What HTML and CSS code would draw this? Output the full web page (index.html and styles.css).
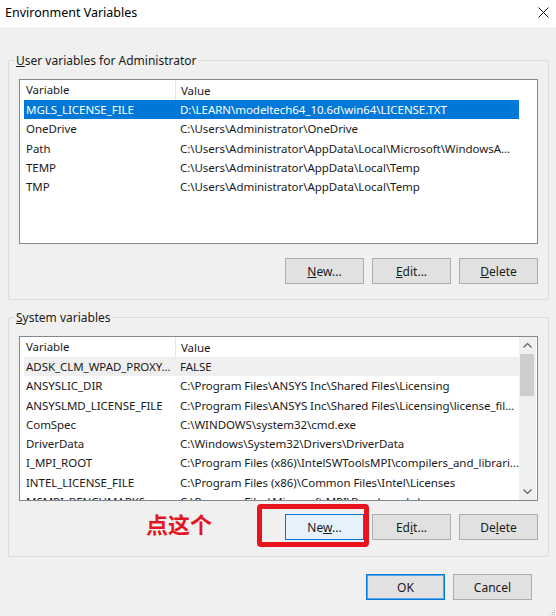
FILE: index.html
```html
<!DOCTYPE html>
<html lang="en">
<head>
    <meta charset="UTF-8">
    <meta name="viewport" content="width=device-width, initial-scale=1.0">
    <title>Environment Variables</title>
    <link rel="stylesheet" href="styles.css">
</head>
<body>
    <div class="titlebar">
        <span class="title">Environment Variables</span>
        <svg class="close" width="11" height="11" viewBox="0 0 11 11">
            <path d="M0.5 0.5 L10.5 10.5 M10.5 0.5 L0.5 10.5" stroke="#111" stroke-width="1" fill="none"/>
        </svg>
    </div>

    <div class="dialog">
        <fieldset class="group">
            <legend><u>U</u>ser variables for Administrator</legend>
            <div class="listbox">
                <div class="list-area">
                    <div class="row header">
                        <div class="col-name">Variable</div>
                        <div class="col-value">Value</div>
                    </div>
                    <div class="row selected">
                        <div class="col-name">MGLS_LICENSE_FILE</div>
                        <div class="col-value">D:\LEARN\modeltech64_10.6d\win64\LICENSE.TXT</div>
                    </div>
                    <div class="row">
                        <div class="col-name">OneDrive</div>
                        <div class="col-value">C:\Users\Administrator\OneDrive</div>
                    </div>
                    <div class="row">
                        <div class="col-name">Path</div>
                        <div class="col-value">C:\Users\Administrator\AppData\Local\Microsoft\WindowsA...</div>
                    </div>
                    <div class="row">
                        <div class="col-name">TEMP</div>
                        <div class="col-value">C:\Users\Administrator\AppData\Local\Temp</div>
                    </div>
                    <div class="row">
                        <div class="col-name">TMP</div>
                        <div class="col-value">C:\Users\Administrator\AppData\Local\Temp</div>
                    </div>
                </div>
            </div>
            <div class="button-row">
                <button class="btn"><u>N</u>ew...</button>
                <button class="btn"><u>E</u>dit...</button>
                <button class="btn"><u>D</u>elete</button>
            </div>
        </fieldset>

        <fieldset class="group second">
            <legend><u>S</u>ystem variables</legend>
            <div class="listbox">
                <div class="list-area">
                    <div class="row header">
                        <div class="col-name">Variable</div>
                        <div class="col-value">Value</div>
                    </div>
                    <div class="row hover">
                        <div class="col-name">ADSK_CLM_WPAD_PROXY...</div>
                        <div class="col-value">FALSE</div>
                    </div>
                    <div class="row">
                        <div class="col-name">ANSYSLIC_DIR</div>
                        <div class="col-value">C:\Program Files\ANSYS Inc\Shared Files\Licensing</div>
                    </div>
                    <div class="row">
                        <div class="col-name">ANSYSLMD_LICENSE_FILE</div>
                        <div class="col-value">C:\Program Files\ANSYS Inc\Shared Files\Licensing\license_fil...</div>
                    </div>
                    <div class="row">
                        <div class="col-name">ComSpec</div>
                        <div class="col-value">C:\WINDOWS\system32\cmd.exe</div>
                    </div>
                    <div class="row">
                        <div class="col-name">DriverData</div>
                        <div class="col-value">C:\Windows\System32\Drivers\DriverData</div>
                    </div>
                    <div class="row">
                        <div class="col-name">I_MPI_ROOT</div>
                        <div class="col-value">C:\Program Files (x86)\IntelSWToolsMPI\compilers_and_librari...</div>
                    </div>
                    <div class="row">
                        <div class="col-name">INTEL_LICENSE_FILE</div>
                        <div class="col-value">C:\Program Files (x86)\Common Files\Intel\Licenses</div>
                    </div>
                    <div class="row">
                        <div class="col-name">MSMPI_BENCHMARKS</div>
                        <div class="col-value">C:\Program Files\Microsoft MPI\Benchmarks\</div>
                    </div>
                </div>
                <div class="scrollbar">
                    <svg class="arrow" width="17" height="17" viewBox="0 0 17 17">
                        <path d="M4.5 10.5 L8.5 6.5 L12.5 10.5" stroke="#606060" stroke-width="1.2" fill="none"/>
                    </svg>
                    <div class="track">
                        <div class="thumb"></div>
                    </div>
                    <svg class="arrow" width="17" height="17" viewBox="0 0 17 17">
                        <path d="M4.5 6.5 L8.5 10.5 L12.5 6.5" stroke="#606060" stroke-width="1.2" fill="none"/>
                    </svg>
                </div>
            </div>
            <div class="button-row">
                <span class="hint">点这个</span>
                <span class="marked">
                    <button class="btn focused">Ne<u>w</u>...</button>
                </span>
                <button class="btn">Ed<u>i</u>t...</button>
                <button class="btn">De<u>l</u>ete</button>
            </div>
        </fieldset>

        <div class="footer">
            <button class="btn default">OK</button>
            <button class="btn">Cancel</button>
        </div>
    </div>

    <svg class="grip" width="8" height="8" viewBox="0 0 8 8">
        <rect x="6" y="2" width="1" height="1" fill="#b0b0b0"/>
        <rect x="4" y="4" width="1" height="1" fill="#b0b0b0"/>
        <rect x="6" y="4" width="1" height="1" fill="#b0b0b0"/>
        <rect x="2" y="6" width="1" height="1" fill="#b0b0b0"/>
        <rect x="4" y="6" width="1" height="1" fill="#b0b0b0"/>
        <rect x="6" y="6" width="1" height="1" fill="#b0b0b0"/>
    </svg>
</body>
</html>
```

FILE: styles.css
```css
body {
    margin: 0;
    width: 556px;
    height: 616px;
    background-color: #f0f0f0;
    font-family: "Noto Sans", "Open Sans", sans-serif;
    font-size: 11.5px;
    color: #1a1a1a;
    position: relative;
    overflow: hidden;
}

.titlebar {
    height: 27px;
    background: #fff;
    display: flex;
    align-items: center;
    justify-content: space-between;
    padding: 0 7px 3px 5px;
    box-sizing: border-box;
}
.title {
    font-size: 12.5px;
    color: #000;
}

.dialog {
    padding: 25px 7px 0 8px;
}

.group {
    margin: 0;
    padding: 0 10px 15px 10px;
    border: 1px solid #dcdcdc;
    border-radius: 2px;
}
.group.second {
    margin-top: 9px;
    padding-bottom: 16px;
}
.group.second .button-row {
    margin-top: 13px;
}
.group legend {
    padding: 0 1px;
    margin-left: -4px;
    line-height: 17px;
    font-size: 12px;
}

.listbox {
    height: 163px;
    margin-top: 10px;
    border: 1px solid #828790;
    background: #fff;
    display: flex;
    overflow: hidden;
}
.list-area {
    width: 499px;
    padding-left: 4px;
    box-sizing: border-box;
}

.row {
    display: flex;
    height: 19.25px;
    align-items: center;
    white-space: nowrap;
    width: 495px;
    letter-spacing: -0.05px;
}
.row.header {
    height: 20px;
}
.row.header .col-name {
    border-right: 1px solid #e5e5e5;
    height: 20px;
    line-height: 20px;
}
.row.selected {
    background: #0078d7;
    color: #fff;
}
.row.hover {
    background: #efefef;
}
.col-name {
    width: 149px;
    padding-left: 2px;
    overflow: hidden;
}
.col-value {
    flex: 1;
    padding-left: 5px;
    overflow: hidden;
}

.scrollbar {
    width: 17px;
    background: #f0f0f0;
    display: flex;
    flex-direction: column;
}
.track {
    flex: 1;
    padding: 0 2px 0 1px;
}
.thumb {
    height: 42px;
    background: #cdcdcd;
}

.button-row {
    display: flex;
    justify-content: flex-end;
    align-items: center;
    gap: 8px;
    margin-top: 14px;
    height: 26px;
}

.btn {
    width: 79px;
    height: 26px;
    padding: 0;
    background: #e1e1e1;
    border: 1px solid #adadad;
    font-family: "Noto Sans", "Open Sans", sans-serif;
    font-size: 12px;
    color: #1a1a1a;
}
.btn.focused {
    background: #e5f1fb;
    border-color: #0078d7;
}
.btn.default {
    border-color: #0078d7;
    box-shadow: inset 0 0 0 1px #5ea5e6;
}

.hint {
    margin-right: 65px;
    margin-bottom: 8px;
    line-height: 22px;
    font-family: "Noto Sans CJK SC", sans-serif;
    font-weight: bold;
    font-size: 22px;
    color: #e3161f;
}

/* red annotation frame drawn over the New button */
.marked {
    position: relative;
    display: flex;
}
.marked::after {
    content: "";
    position: absolute;
    left: -28px;
    top: -10px;
    right: -5px;
    bottom: -7px;
    border: 5px solid #e8131d;
    border-radius: 4px;
}

.footer {
    display: flex;
    justify-content: flex-end;
    gap: 8px;
    margin-top: 17px;
    padding-right: 17px;
}

.grip {
    position: absolute;
    right: 0;
    bottom: 0;
}
```
